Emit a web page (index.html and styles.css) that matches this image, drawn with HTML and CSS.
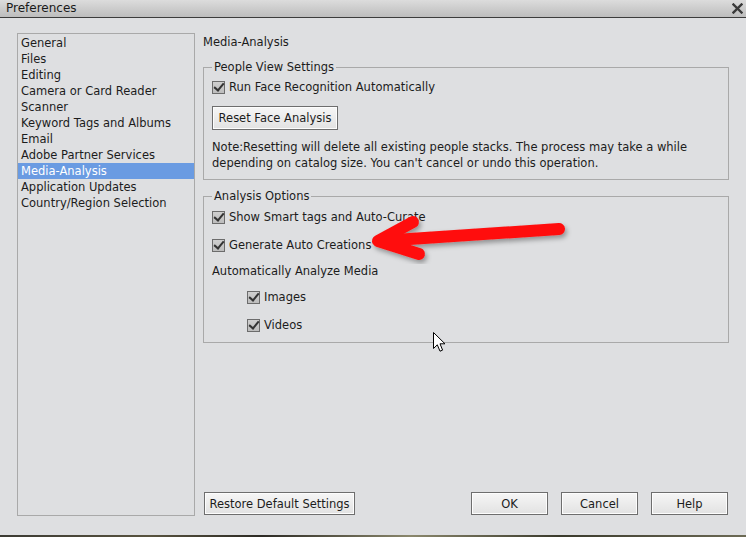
FILE: index.html
```html
<!DOCTYPE html>
<html lang="en">
<head>
  <meta charset="UTF-8">
  <title>Preferences</title>
  <link rel="stylesheet" href="styles.css">
</head>
<body>

  <div class="window">
    <!-- Title bar -->
    <div class="titlebar">
      <span class="title">Preferences</span>
      <svg class="close" width="11" height="11" viewBox="0 0 11 11">
        <path d="M1.5 1.5 L9.5 9.5 M9.5 1.5 L1.5 9.5" stroke="#3a3a3a" stroke-width="2.4" stroke-linecap="square"/>
      </svg>
    </div>

    <div class="dialog">
      <!-- Category list -->
      <ul class="nav">
        <li>General</li>
        <li>Files</li>
        <li>Editing</li>
        <li>Camera or Card Reader</li>
        <li>Scanner</li>
        <li>Keyword Tags and Albums</li>
        <li>Email</li>
        <li>Adobe Partner Services</li>
        <li class="selected">Media-Analysis</li>
        <li>Application Updates</li>
        <li>Country/Region Selection</li>
      </ul>

      <div class="main">
        <div class="page-title">Media-Analysis</div>

        <fieldset class="group group-people">
          <legend>People View Settings</legend>
          <label class="check first"><span class="box"></span>Run Face Recognition Automatically</label>
          <button type="button" class="btn btn-reset">Reset Face Analysis</button>
          <p class="note">Note:Resetting will delete all existing people stacks. The process may take a while depending on catalog size. You can't cancel or undo this operation.</p>
        </fieldset>

        <fieldset class="group group-analysis">
          <legend>Analysis Options</legend>
          <label class="check first"><span class="box"></span>Show Smart tags and Auto-Curate</label>
          <label class="check gap-lg"><span class="box"></span>Generate Auto Creations</label>
          <div class="row gap-md">Automatically Analyze Media</div>
          <label class="check sub gap-md"><span class="box"></span>Images</label>
          <label class="check sub gap-lg"><span class="box"></span>Videos</label>
        </fieldset>

        <div class="footer">
          <button type="button" class="btn btn-restore">Restore Default Settings</button>
          <div class="actions">
            <button type="button" class="btn btn-action">OK</button>
            <button type="button" class="btn btn-action">Cancel</button>
            <button type="button" class="btn btn-action">Help</button>
          </div>
        </div>
      </div>
    </div>

    <!-- Annotation arrow drawn over the dialog -->
    <svg class="annotation" width="746" height="535" viewBox="0 0 746 535">
      <defs>
        <filter id="shadow" x="-10%" y="-30%" width="120%" height="160%">
          <feDropShadow dx="2" dy="3" stdDeviation="2.5" flood-color="#000" flood-opacity="0.35"/>
        </filter>
      </defs>
      <g filter="url(#shadow)" stroke="#ff1010" stroke-width="12" stroke-linecap="round" stroke-linejoin="round" fill="none">
        <path d="M559 229 L380 241"/>
        <path d="M413 222 L378 241 L419 254"/>
      </g>
    </svg>

    <!-- Mouse pointer -->
    <svg class="pointer" width="13" height="21" viewBox="0 0 13 21">
      <path d="M0.5 0.5 L0.5 16.5 L4.3 12.8 L7 19.2 L9.6 18.1 L7 11.8 L12 11.8 Z" fill="#fff" stroke="#000" stroke-width="1"/>
    </svg>
  </div>

  <div class="desktop"></div>

</body>
</html>
```

FILE: styles.css
```css
body {
  margin: 0;
  padding: 0;
  background-color: #2e2b22;
  font-family: "DejaVu Sans", Verdana, sans-serif;
  font-size: 11.5px;
  color: #1c1c1c;
}

.window {
  position: relative;
  width: 746px;
  height: 535px;
  background-color: #dedfe1;
  overflow: hidden;
}

.titlebar {
  height: 17px;
  border-bottom: 1px solid #3c3c3c;
  background: linear-gradient(#dcdcdc, #bdbdbd);
  display: flex;
  align-items: center;
  justify-content: space-between;
  padding: 0 3px 0 6px;
}

.title {
  font-size: 12px;
  color: #1a1a1a;
  line-height: 17px;
}

.close {
  display: block;
}

.dialog {
  display: flex;
  gap: 8px;
  padding: 15px 17px 0 17px;
}

/* Left category list */
.nav {
  list-style: none;
  margin: 0;
  padding: 1px 0 0 0;
  width: 176px;
  height: 480px;
  border: 1px solid #a9a9a9;
}

.nav li {
  line-height: 16px;
  height: 16px;
  padding-left: 3px;
  white-space: nowrap;
}

.nav li.selected {
  background-color: #6a9be2;
  color: #fff;
}

/* Right panel */
.main {
  flex: 1;
  height: 482px;
  display: flex;
  flex-direction: column;
}

.page-title {
  line-height: 16px;
  margin-top: 1px;
  margin-bottom: 9px;
}

.group {
  margin: 0;
  padding: 0 8px;
  border: 1px solid #a9a9a9;
  min-width: 0;
}

.group legend {
  padding: 0 2px;
  line-height: 16px;
}

.group-people {
  padding-bottom: 8px;
}

.group-analysis {
  margin-top: 8px;
  padding-bottom: 9px;
}

.check {
  display: flex;
  align-items: center;
  height: 16px;
  line-height: 16px;
}

.check.first {
  margin-top: 4px;
}

.group-analysis .check.first {
  margin-top: 5px;
}

.check.sub {
  padding-left: 35px;
}

.row {
  line-height: 16px;
}

.gap-lg {
  margin-top: 12px;
}

.gap-md {
  margin-top: 10px;
}

.box {
  position: relative;
  width: 11px;
  height: 11px;
  margin-right: 4px;
  border: 1px solid #6c6c6c;
  background: linear-gradient(#cfcfcf, #bdbdbd);
  flex-shrink: 0;
}

.box::after {
  content: "";
  position: absolute;
  left: 3px;
  top: -1px;
  width: 4px;
  height: 8px;
  border-right: 2px solid #333;
  border-bottom: 2px solid #333;
  transform: rotate(40deg);
}

.note {
  margin: 9px 0 0 0;
  line-height: 16px;
}

/* Buttons */
.btn {
  font-family: inherit;
  font-size: 11.5px;
  color: #1c1c1c;
  height: 23px;
  border: 1px solid #6e6e6e;
  background: linear-gradient(#f6f6f6, #e2e2e2);
  box-shadow: inset 0 0 0 1px #fdfdfd;
  padding: 0;
  margin: 0;
  cursor: pointer;
}

.btn-reset {
  display: block;
  width: 126px;
  height: 24px;
  margin-top: 11px;
}

.footer {
  margin-top: auto;
  display: flex;
  justify-content: space-between;
  padding: 0 1px;
}

.btn-restore {
  width: 151px;
}

.actions {
  display: flex;
  gap: 13px;
}

.btn-action {
  width: 77px;
}

/* Overlays */
.annotation {
  position: absolute;
  left: 0;
  top: 0;
  pointer-events: none;
}

.pointer {
  position: absolute;
  left: 433px;
  top: 332px;
  pointer-events: none;
}

.desktop {
  height: 2px;
  background: linear-gradient(90deg, #3b3a33 0%, #58533f 20%, #2c2a24 35%, #8a876c 55%, #3a3a2c 75%, #6c6a55 100%);
}
```
